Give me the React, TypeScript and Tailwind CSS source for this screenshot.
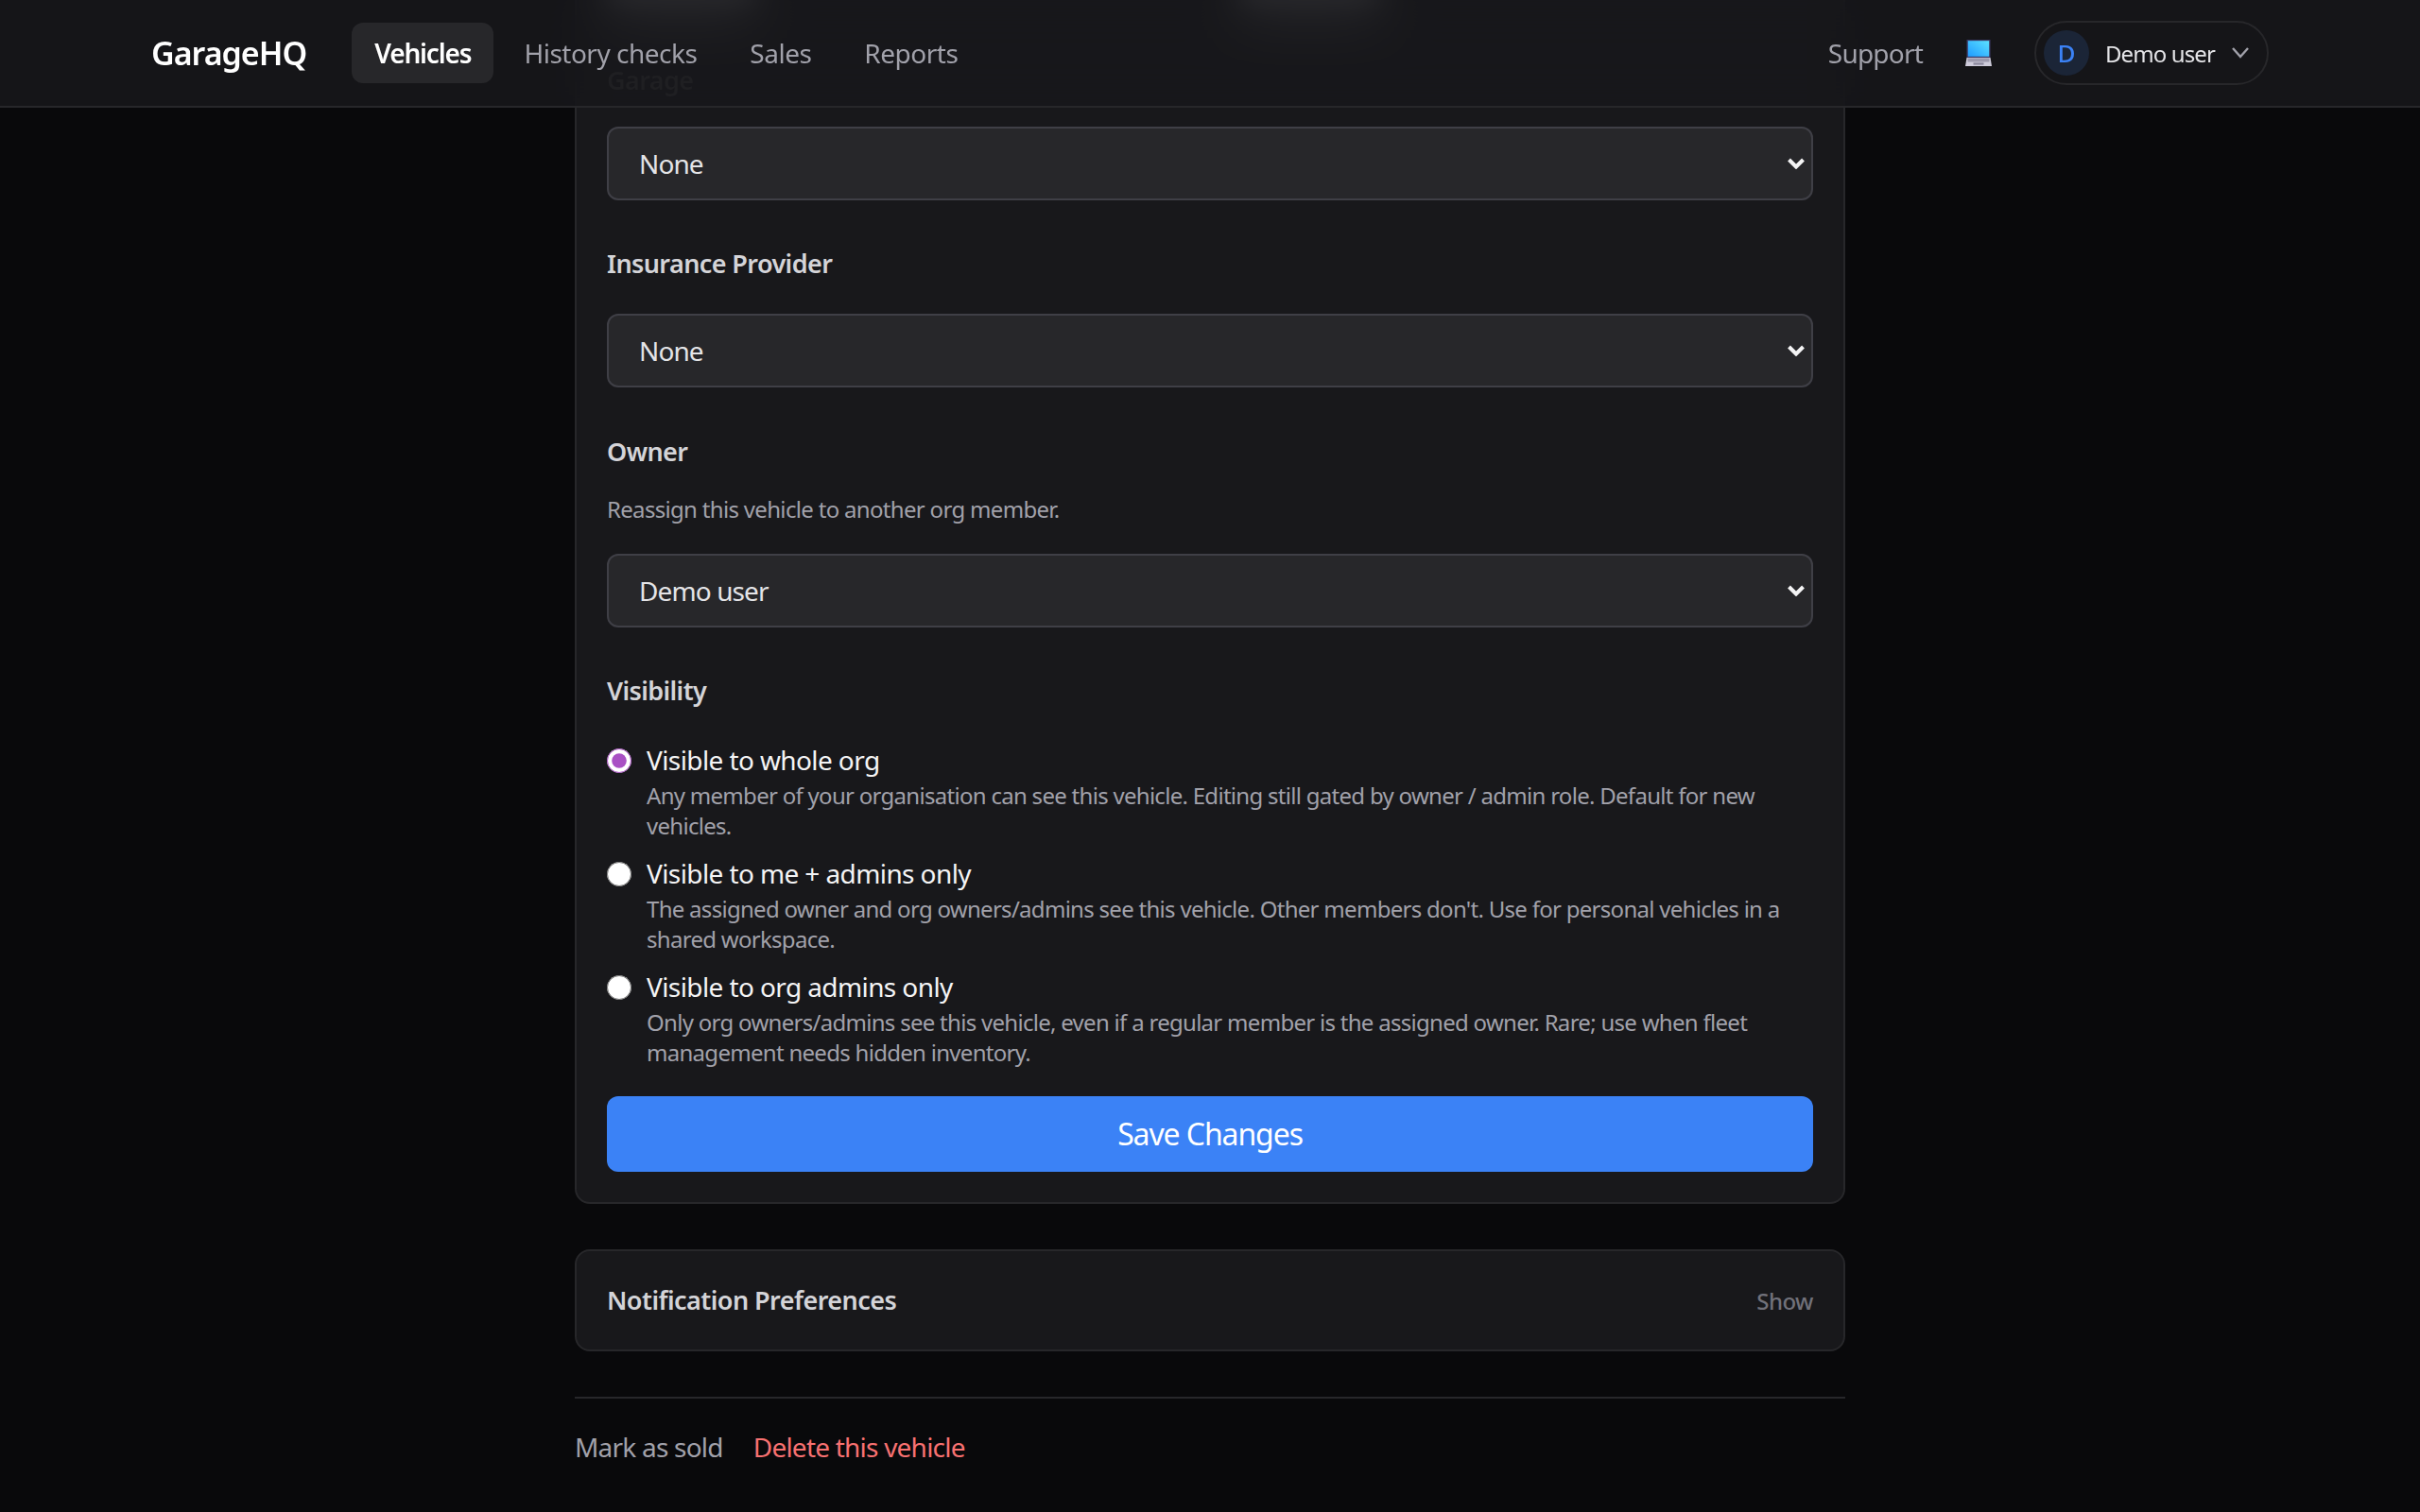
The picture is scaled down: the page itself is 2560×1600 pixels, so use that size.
import React from "react";

function Chevron() {
  return (
    <svg className="pointer-events-none absolute right-[9px] top-[33px]" width="18" height="12" viewBox="0 0 18 12" fill="none">
      <path d="M1.5 2 L9 9.5 L16.5 2" stroke="#f4f4f5" strokeWidth="4" />
    </svg>
  );
}

function SelectField({ value }: { value: string }) {
  return (
    <div className="relative">
      <select
        defaultValue={value}
        className="block h-[78px] w-full appearance-none rounded-xl border-2 border-[#3f3f46] bg-[#27272a] px-[32px] text-[28px] tracking-[-0.9px] text-[#e4e4e7]"
      >
        <option>{value}</option>
      </select>
      <Chevron />
    </div>
  );
}

function Radio({ title, lines, checked }: { title: string; lines: string; checked?: boolean }) {
  return (
    <label className="flex gap-4">
      <input
        type="radio"
        name="visibility"
        defaultChecked={checked}
        className="m-0 mt-[8px] h-[26px] w-[26px] shrink-0 accent-[#a94fc4]"
      />
      <span className="block">
        <span className="block h-[42px] text-[28px] leading-[40px] tracking-[-0.6px] text-[#f4f4f5]">{title}</span>
        <span className="block text-[24px] leading-[32px] tracking-[-0.71px] text-[#a1a1aa]">{lines}</span>
      </span>
    </label>
  );
}

function Laptop() {
  return (
    <svg width="28" height="28" viewBox="0 0 28 28">
      <defs>
        <linearGradient id="lap" x1="0" y1="1" x2="1" y2="0">
          <stop offset="0" stopColor="#1f9bff" />
          <stop offset="1" stopColor="#5ce1ff" />
        </linearGradient>
      </defs>
      <rect x="1.5" y="0" width="25" height="19" fill="#3c3a66" />
      <rect x="2.8" y="1.2" width="22.4" height="16.6" fill="url(#lap)" />
      <path d="M1.5 19 H26.5 L28 28 H0 Z" fill="#cfccdb" />
      <rect x="2.5" y="19.5" width="23" height="4" fill="#9d9aad" />
      <rect x="8.5" y="24.4" width="11" height="2.2" fill="#8a879b" />
    </svg>
  );
}

const labelClass = "h-[38px] text-[27px] font-semibold leading-[38px] tracking-[-0.6px] text-[#d4d4d8]";

export default function App() {
  return (
    <div className="relative h-[1600px] overflow-hidden bg-[#09090b] font-['Noto_Sans',sans-serif]">
      <header className="absolute inset-x-0 top-0 z-10 h-[114px] border-b-2 border-[#27272a] bg-[#18181bd9] backdrop-blur-[24px]">
        <div className="mx-auto flex h-[112px] w-[2240px] items-center justify-between">
          <div className="flex items-center">
            <span className="mr-[48px] text-[34px] font-semibold tracking-[-1px] text-white">GarageHQ</span>
            <nav className="flex items-center gap-[8px] text-[28px] leading-[28px] tracking-[-0.5px]">
              <span className="flex h-[64px] items-center rounded-xl bg-[#27272a] px-[24px] font-semibold tracking-[-1.15px] text-white">Vehicles</span>
              <span className="px-[24px] text-[#a1a1aa]">History checks</span>
              <span className="px-[24px] text-[#a1a1aa]">Sales</span>
              <span className="px-[24px] text-[#a1a1aa]">Reports</span>
            </nav>
          </div>
          <div className="flex items-center gap-[45px]">
            <span className="text-[28px] tracking-[-0.8px] text-[#a1a1aa]">Support</span>
            <Laptop />
            <div className="flex h-[68px] w-[248px] items-center rounded-full border-2 border-[#27272a] pl-[8px]">
              <span className="flex h-[48px] w-[48px] items-center justify-center rounded-full bg-[#1b2537] text-[26px] font-medium text-[#3b82f6]">D</span>
              <span className="ml-[17px] mt-[2px] text-[24px] tracking-[-0.9px] text-[#e4e4e7]">Demo user</span>
              <svg className="ml-[18px]" width="18" height="12" viewBox="0 0 18 12" fill="none">
                <path d="M1 1 L9 10 L17 1" stroke="#a1a1aa" strokeWidth="2.4" />
              </svg>
            </div>
          </div>
        </div>
      </header>

      <main className="mx-auto mt-[-72px] w-[1344px]">
        <div className="flex flex-col rounded-2xl border-2 border-[#27272a] bg-[#18181b] p-[32px]">
          <div className="grid h-[110px] grid-cols-2 gap-[32px] pt-[26px]">
            <div className="h-[24px] w-[158px] bg-[#e4e4e7] blur-[16px]" />
            <div className="ml-[14px] h-[24px] w-[150px] bg-[#e4e4e7] blur-[16px]" />
          </div>
          <div className="relative z-20 h-[28px] text-[27px] font-semibold leading-[26px] tracking-[-0.6px] text-[#1f1f22]">Garage</div>
          <div className="mt-[34px]"><SelectField value="None" /></div>

          <div className={`mt-[48px] ${labelClass}`}>Insurance Provider</div>
          <div className="mt-[34px]"><SelectField value="None" /></div>

          <div className={`mt-[49px] ${labelClass}`}>Owner</div>
          <div className="mt-[26px] h-[32px] text-[24px] leading-[32px] tracking-[-0.68px] text-[#a1a1aa]">Reassign this vehicle to another org member.</div>
          <div className="mt-[31px]"><SelectField value="Demo user" /></div>

          <div className={`mt-[48px] ${labelClass}`}>Visibility</div>
          <div className="mt-[34px] flex flex-col gap-[14px]">
            <Radio checked title="Visible to whole org" lines="Any member of your organisation can see this vehicle. Editing still gated by owner / admin role. Default for new vehicles." />
            <Radio title="Visible to me + admins only" lines="The assigned owner and org owners/admins see this vehicle. Other members don't. Use for personal vehicles in a shared workspace." />
            <Radio title="Visible to org admins only" lines="Only org owners/admins see this vehicle, even if a regular member is the assigned owner. Rare; use when fleet management needs hidden inventory." />
          </div>
          <button className="mt-[30px] h-[80px] rounded-xl bg-[#3b82f6] text-[32px] tracking-[-1.1px] text-white">Save Changes</button>
        </div>

        <div className="mt-[48px] flex h-[108px] items-center justify-between rounded-2xl border-2 border-[#27272a] bg-[#18181b] px-[32px]">
          <span className="text-[27px] font-semibold tracking-[-0.55px] text-[#d4d4d8]">Notification Preferences</span>
          <span className="mt-[2px] text-[24px] font-medium tracking-[-0.5px] text-[#71717a]">Show</span>
        </div>

        <div className="mt-[48px] flex gap-[32px] border-t-2 border-[#27272a] pt-[31px] text-[28px] leading-[40px] tracking-[-0.78px]">
          <span className="text-[#a1a1aa]">Mark as sold</span>
          <span className="text-[#f87171]">Delete this vehicle</span>
        </div>
      </main>
    </div>
  );
}
